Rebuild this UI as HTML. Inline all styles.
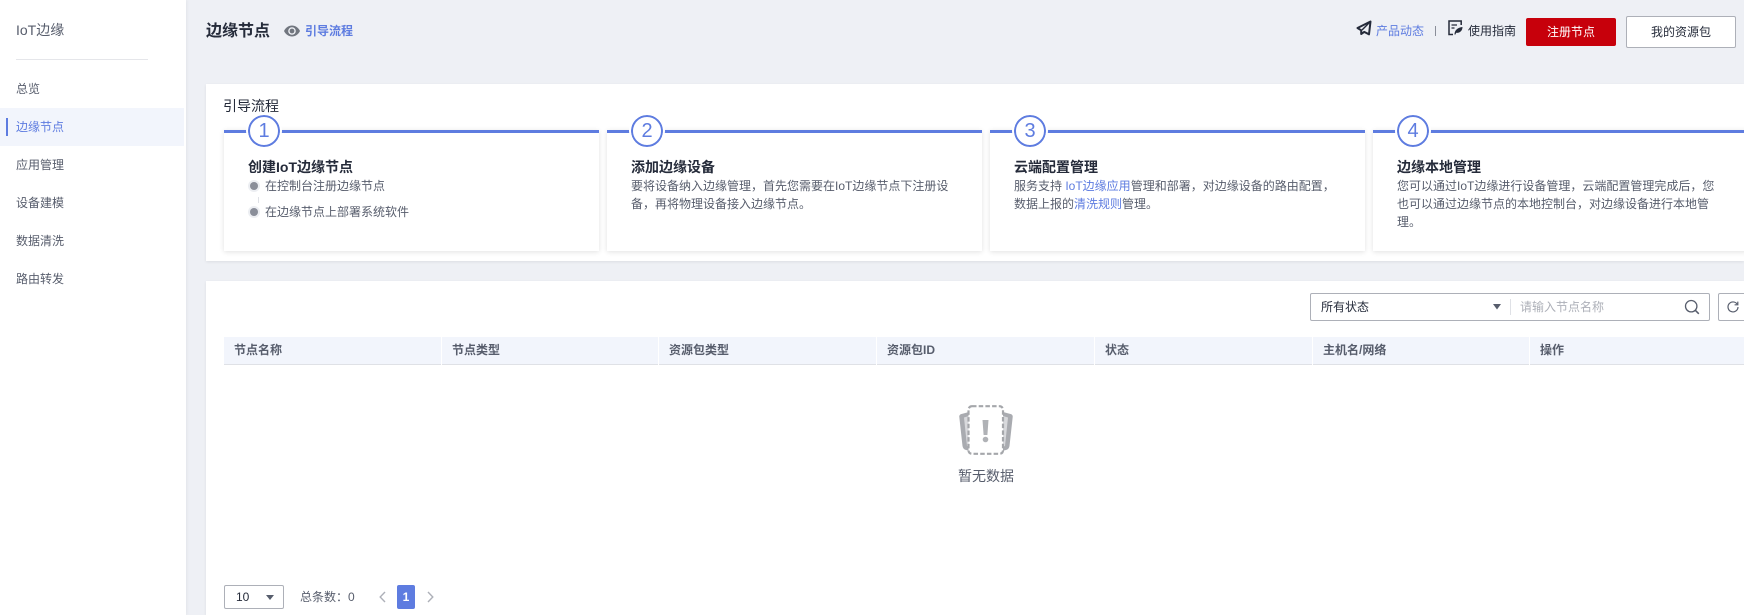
<!DOCTYPE html>
<html lang="zh">
<head>
<meta charset="utf-8">
<title>边缘节点</title>
<style>
html,body{margin:0;padding:0;width:1744px;height:615px;overflow:hidden;background:#eef0f5;}
body{position:relative;font-family:"Liberation Sans","Noto Sans CJK SC",sans-serif;font-size:12px;color:#575d6c;}
.a{position:absolute;white-space:nowrap;}
.t{position:absolute;white-space:nowrap;line-height:18px;height:18px;}
svg{position:absolute;display:block;}
.side{position:absolute;left:0;top:0;width:186px;height:615px;background:#fff;box-shadow:1px 0 3px rgba(0,0,0,.05);}
.panel{position:absolute;left:206px;width:1538px;background:#fff;box-shadow:0 1px 3px rgba(0,0,0,.08);}
.step{position:absolute;top:130px;width:375px;height:121px;background:#fff;box-shadow:0 1px 5px rgba(0,0,0,.12);}
.step .bar{position:absolute;left:0;top:0;right:0;height:3px;background:#5e7ce0;}
.step .c{position:absolute;left:24px;top:-15px;width:28px;height:28px;border:2px solid #5e7ce0;border-radius:50%;background:#fff;outline:2px solid #fff;color:#5e7ce0;font-size:20px;line-height:28px;text-align:center;}
.step h4{position:absolute;left:24px;top:27px;margin:0;font-size:14px;font-weight:700;line-height:20px;color:#252b3a;white-space:nowrap;}
.step p{position:absolute;left:24px;top:47px;margin:0;font-size:12px;line-height:18px;color:#575d6c;white-space:nowrap;}
a{color:#5e7ce0;text-decoration:none;}
.dot{position:absolute;width:8px;height:8px;border-radius:50%;background:#8a8e99;box-shadow:0 0 0 2px #eceef2;}
.th{position:absolute;top:337px;height:27px;line-height:27px;background:#f2f5fc;border-bottom:1px solid #dfe1e6;color:#575d6c;font-weight:700;font-size:12px;box-sizing:content-box;}
.th span{position:absolute;left:10px;top:0;white-space:nowrap;}
</style>
</head>
<body>

<div class="side"></div>
<div class="t" style="left:16px;top:20px;font-size:14px;line-height:20px;height:20px;color:#575d6c;">IoT边缘</div>
<div class="a" style="left:16px;top:59px;width:132px;height:1px;background:#e5e6ea;"></div>
<div class="a" style="left:0;top:108px;width:184px;height:38px;background:#f2f5fc;"></div>
<div class="a" style="left:6px;top:118px;width:2px;height:18px;background:#5e7ce0;"></div>
<div class="t" style="left:16px;top:80px;">总览</div>
<div class="t" style="left:16px;top:118px;color:#5e7ce0;">边缘节点</div>
<div class="t" style="left:16px;top:156px;">应用管理</div>
<div class="t" style="left:16px;top:194px;">设备建模</div>
<div class="t" style="left:16px;top:232px;">数据清洗</div>
<div class="t" style="left:16px;top:270px;">路由转发</div>

<div class="t" style="left:206px;top:21px;font-size:16px;font-weight:700;line-height:22px;height:22px;color:#252b3a;">边缘节点</div>
<svg style="left:284px;top:25px;" width="16" height="12" viewBox="0 0 16 12"><path d="M0 6C2 2.2 4.8 .5 8 .5S14 2.2 16 6C14 9.8 11.2 11.5 8 11.5S2 9.8 0 6Z" fill="#71767f"/><circle cx="8" cy="6" r="3.8" fill="#eef0f5"/><circle cx="8" cy="6" r="2.4" fill="#71767f"/></svg>
<div class="t" style="left:305px;top:22px;color:#5e7ce0;font-weight:700;">引导流程</div>

<svg style="left:1356px;top:20px;" width="16" height="16" viewBox="0 0 16 16"><path d="M14.5 1.5L1.5 8L5.2 10.3V14L8.2 11.9L13 14.3Z" fill="none" stroke="#252b3a" stroke-width="2" stroke-linejoin="round"/><path d="M14 2L6 10" stroke="#252b3a" stroke-width="1.4"/></svg>
<div class="t" style="left:1376px;top:22px;color:#5e7ce0;">产品动态</div>
<div class="a" style="left:1435px;top:26px;width:1px;height:10px;background:#8a8e99;"></div>
<svg style="left:1448px;top:20px;" width="15" height="16" viewBox="0 0 15 16"><path d="M13.2 5V1H1V14.5H5" fill="none" stroke="#252b3a" stroke-width="1.5"/><path d="M3.5 5H9M3.5 8H6.5" stroke="#252b3a" stroke-width="1.3"/><path d="M6.5 14C6.8 10 9.8 7.5 14.5 7C14.5 11 11.5 13.2 8.3 12.8L7 15Z" fill="#252b3a"/></svg>
<div class="t" style="left:1468px;top:22px;color:#252b3a;">使用指南</div>
<div class="a" style="left:1526px;top:18px;width:90px;height:28px;background:#c7000b;border-radius:2px;color:#fff;line-height:28px;text-align:center;">注册节点</div>
<div class="a" style="left:1626px;top:16px;width:108px;height:30px;background:#fff;border:1px solid #adb0b8;border-radius:2px;color:#252b3a;line-height:30px;text-align:center;">我的资源包</div>

<div class="panel" style="top:84px;height:177px;"></div>
<div class="t" style="left:223px;top:96px;font-size:14px;line-height:20px;height:20px;color:#252b3a;">引导流程</div>

<div class="step" style="left:224px;">
  <div class="bar"></div><div class="c">1</div>
  <h4>创建IoT边缘节点</h4>
</div>
<div class="dot" style="left:250px;top:182px;"></div>
<div class="a" style="left:258px;top:197px;width:1px;height:6px;background:#dfe1e6;"></div>
<div class="dot" style="left:250px;top:208px;"></div>
<div class="t" style="left:265px;top:177px;">在控制台注册边缘节点</div>
<div class="t" style="left:265px;top:203px;">在边缘节点上部署系统软件</div>

<div class="step" style="left:607px;">
  <div class="bar"></div><div class="c">2</div>
  <h4>添加边缘设备</h4>
  <p>要将设备纳入边缘管理，首先您需要在IoT边缘节点下注册设<br>备，再将物理设备接入边缘节点。</p>
</div>
<div class="step" style="left:990px;">
  <div class="bar"></div><div class="c">3</div>
  <h4>云端配置管理</h4>
  <p>服务支持 <a>IoT边缘应用</a>管理和部署，对边缘设备的路由配置，<br>数据上报的<a>清洗规则</a>管理。</p>
</div>
<div class="step" style="left:1373px;">
  <div class="bar"></div><div class="c">4</div>
  <h4>边缘本地管理</h4>
  <p>您可以通过IoT边缘进行设备管理，云端配置管理完成后，您<br>也可以通过边缘节点的本地控制台，对边缘设备进行本地管<br>理。</p>
</div>

<div class="panel" style="top:281px;height:334px;"></div>

<div class="a" style="left:1310px;top:293px;width:398px;height:26px;background:#fff;border:1px solid #adb0b8;border-radius:2px;"></div>
<div class="t" style="left:1321px;top:298px;color:#252b3a;">所有状态</div>
<svg style="left:1493px;top:304px;" width="8" height="6" viewBox="0 0 8 6"><path d="M0 0H8L4 5.5Z" fill="#575d6c"/></svg>
<div class="a" style="left:1510px;top:299px;width:1px;height:16px;background:#dfe1e6;"></div>
<div class="t" style="left:1520px;top:298px;color:#adb0b8;">请输入节点名称</div>
<svg style="left:1684px;top:299px;" width="16" height="16" viewBox="0 0 16 16"><circle cx="7.2" cy="7.2" r="5.7" fill="none" stroke="#575d6c" stroke-width="1.3"/><path d="M11.3 11.3L14.8 14.8" stroke="#575d6c" stroke-width="1.5"/></svg>
<div class="a" style="left:1718px;top:293px;width:40px;height:26px;background:#fff;border:1px solid #adb0b8;border-radius:2px;"></div>
<svg style="left:1727px;top:301px;" width="12" height="12" viewBox="0 0 12 12"><path d="M10.2 3.2A5 5 0 1 0 11 6" fill="none" stroke="#575d6c" stroke-width="1.2"/><path d="M10.8 .6V3.8H7.6" fill="none" stroke="#575d6c" stroke-width="1.2"/></svg>

<div class="th" style="left:224px;width:217px;"><span>节点名称</span></div>
<div class="th" style="left:442px;width:216px;"><span>节点类型</span></div>
<div class="th" style="left:659px;width:217px;"><span>资源包类型</span></div>
<div class="th" style="left:877px;width:217px;"><span>资源包ID</span></div>
<div class="th" style="left:1095px;width:217px;"><span>状态</span></div>
<div class="th" style="left:1313px;width:216px;"><span>主机名/网络</span></div>
<div class="th" style="left:1530px;width:214px;"><span>操作</span></div>

<svg style="left:959px;top:405px;" width="54" height="50" viewBox="0 0 54 50">
  <path d="M10 7L2.5 9C1 9.4 0 10.5 0.3 12L3.5 41C3.8 43 5 44.5 7 45L11 46Z" fill="#a9abb0"/>
  <path d="M10 11L5 12.5L8 41L10 42Z" fill="#d8d9dc"/>
  <path d="M44 7L51.5 9C53 9.4 54 10.5 53.7 12L50.5 41C50.2 43 49 44.5 47 45L43 46Z" fill="#a9abb0"/>
  <path d="M44 11L49 12.5L46 41L44 42Z" fill="#d8d9dc"/>
  <rect x="9.5" y="1.2" width="34.5" height="47.6" rx="3.5" fill="#fff" stroke="#a5a7ab" stroke-width="2.2" stroke-dasharray="4.5 2.2"/>
  <path d="M23.5 15H29.5L28.4 30H24.6Z" fill="#b0b2b6"/>
  <circle cx="26.5" cy="34.5" r="2.8" fill="#b0b2b6"/>
</svg>
<div class="t" style="left:958px;top:466px;font-size:14px;line-height:20px;height:20px;color:#575d6c;">暂无数据</div>

<div class="a" style="left:224px;top:585px;width:58px;height:22px;background:#fff;border:1px solid #adb0b8;border-radius:2px;"></div>
<div class="t" style="left:236px;top:588px;color:#252b3a;">10</div>
<svg style="left:266px;top:595px;" width="8" height="5" viewBox="0 0 8 5"><path d="M0 0H8L4 5Z" fill="#575d6c"/></svg>
<div class="t" style="left:300px;top:588px;">总条数：0</div>
<svg style="left:379px;top:591px;" width="7" height="12" viewBox="0 0 7 12"><path d="M6 1L1.2 6L6 11" fill="none" stroke="#adb0b8" stroke-width="1.4"/></svg>
<div class="a" style="left:397px;top:585px;width:18px;height:24px;background:#5e7ce0;border-radius:2px;color:#fff;font-weight:700;line-height:24px;text-align:center;">1</div>
<svg style="left:427px;top:591px;" width="7" height="12" viewBox="0 0 7 12"><path d="M1 1L5.8 6L1 11" fill="none" stroke="#adb0b8" stroke-width="1.4"/></svg>

</body>
</html>
